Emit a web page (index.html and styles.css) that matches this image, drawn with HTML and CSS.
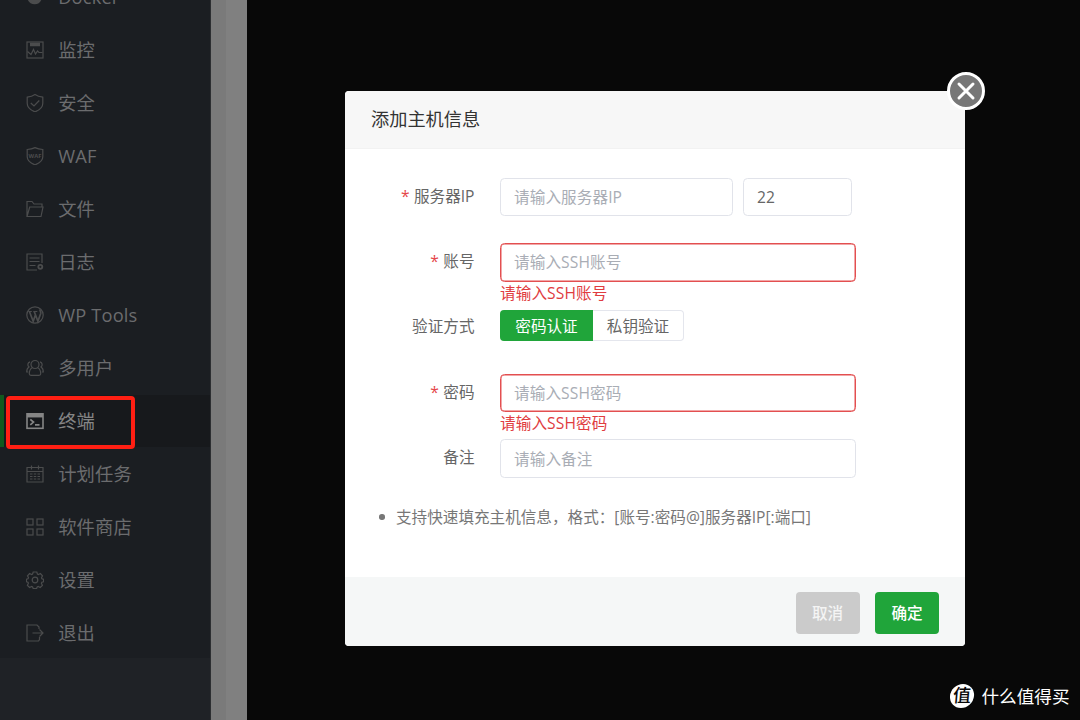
FILE: index.html
```html
<!DOCTYPE html>
<html lang="zh-CN">
<head>
    <meta charset="UTF-8">
    <meta name="viewport" content="width=device-width, initial-scale=1.0">
    <title>终端</title>
    <link rel="stylesheet" href="styles.css">
</head>
<body>
    <div class="layout">
        <div class="sidebar">
            <ul class="menu">
                <li>
                    <svg class="icon" viewBox="0 0 18 18"><path d="M1 8h15c0 4.800-2.800 8.300-7.300 8.300S1 12.800 1 8z" fill="currentColor" stroke="none"/></svg>
                    <span>Docker</span>
                </li>
                <li>
                    <svg class="icon" viewBox="0 0 18 18"><rect x="1" y="1" width="16" height="16"/><path d="M4 3.500h10" stroke-width="3.500"/><path d="M1.500 10.500l3.500 3 2.500-5 2 4.500 2-3 1.500 1.500h3.500"/></svg>
                    <span>监控</span>
                </li>
                <li>
                    <svg class="icon" viewBox="0 0 18 18"><path d="M9 .6c2.500 1.700 5 2.300 7.800 2.600v6c0 4-3.300 6.800-7.800 8.700-4.500-1.900-7.800-4.700-7.800-8.700v-6C4 2.900 6.500 2.300 9 .6z"/><path d="M4.800 9l3.200 3 5.300-5.500"/></svg>
                    <span>安全</span>
                </li>
                <li>
                    <svg class="icon" viewBox="0 0 18 18"><path d="M9 .6c2.500 1.200 5 1.700 7.800 1.900v7.200c0 3.800-3.300 6.400-7.800 8.200-4.500-1.800-7.800-4.400-7.800-8.200V2.500C4 2.300 6.500 1.800 9 .6z"/><text class="waf" x="9" y="10.800" text-anchor="middle">WAF</text></svg>
                    <span>WAF</span>
                </li>
                <li>
                    <svg class="icon" viewBox="0 0 18 18"><path d="M1 16.500V1.500h5l2 2.500h8v3M1 16.500L3.700 7H17l-2 9.500z"/></svg>
                    <span>文件</span>
                </li>
                <li>
                    <svg class="icon" viewBox="0 0 18 18"><path d="M16 10V1H1v16h10M3.500 5h10M3.500 8.500h10M3.500 12.500h6"/><circle cx="14.300" cy="13.800" r="2" stroke-width="1.800"/></svg>
                    <span>日志</span>
                </li>
                <li>
                    <svg class="icon" viewBox="0 0 18 18"><circle cx="9" cy="9" r="8.200"/><path d="M2.300 5.500h3.500M7.300 5.500h4" /><path d="M3.500 5.800l3.700 9.500L9.400 9M8.300 5.800l3.600 9.500 2.800-7.800c.5-1.700-1-2.500-.7-4" stroke-width="1.700"/></svg>
                    <span>WP Tools</span>
                </li>
                <li>
                    <svg class="icon" viewBox="0 0 18 18"><circle cx="9" cy="5.500" r="4"/><path d="M6.300 8.800c-2 1-3 3-3 6 0 1 .7 1.500 1.700 1.500h8c1 0 1.700-.5 1.700-1.500 0-3-1-5-3-6M4 2.800C1.500 3.500 1.200 6.500 3 8c-1.600.9-2.300 2.500-2.300 5h1.500M14 2.800c2.500.7 2.800 3.700 1 5.200 1.600.9 2.300 2.500 2.300 5h-1.500"/></svg>
                    <span>多用户</span>
                </li>
                <li class="active">
                    <svg class="icon" viewBox="0 0 18 18"><rect x="1" y="1.800" width="16" height="14.500" stroke-width="1.600"/><path d="M1 3.700h16" stroke-width="3.500"/><path d="M4.300 7.300l3.200 2.800-3.200 2.800M9 12.800h4.500" stroke-width="1.700"/></svg>
                    <span>终端</span>
                </li>
                <li>
                    <svg class="icon" viewBox="0 0 18 18"><path d="M1 2.500h16V17H1zM1 6.500h16M5.500.5v4M12.500.5v4"/><path d="M4 9h10M4 11.500h10M4 14h10" stroke-dasharray="2.500 1.250"/></svg>
                    <span>计划任务</span>
                </li>
                <li>
                    <svg class="icon" viewBox="0 0 18 18"><rect x="1" y="1" width="6" height="6"/><rect x="11" y="1" width="6" height="6"/><rect x="1" y="11" width="6" height="6"/><rect x="11" y="11" width="6" height="6"/></svg>
                    <span>软件商店</span>
                </li>
                <li>
                    <svg class="icon" viewBox="0 0 18 18"><circle cx="9" cy="9" r="2.800"/><path d="M7.200 1h3.600l.6 2 1 .5 2-1 2.100 2.300-1 2 .4 1 1.700.5v2.400l-1.700.6-.5 1 1 2-2.200 2.200-2-1-1 .5-.6 1.500H7.200l-.6-1.500-1-.5-2 1-2.200-2.200 1-2-.4-1-1.600-.6V8.300L2 7.800l.5-1-1-2 2.100-2.300 2 1 1-.5z"/></svg>
                    <span>设置</span>
                </li>
                <li>
                    <svg class="icon" viewBox="0 0 18 18"><path d="M13 5V3l-2-2H1v16h11.500l1-1.500V13M6.500 9h10M13.500 5.500L17 9l-3.500 3.500"/></svg>
                    <span>退出</span>
                </li>
            </ul>
        </div>
        <div class="gutter"></div>
        <div class="terminal"></div>
    </div>

    <div class="mark-box"></div>

    <div class="dialog">
        <div class="dialog-header">添加主机信息</div>
        <div class="close-btn">
            <svg viewBox="0 0 20 20"><path d="M3 3l14 14M17 3L3 17"/></svg>
        </div>
        <div class="dialog-body">
            <div class="form-row">
                <label class="required">服务器IP</label>
                <div class="field hosts">
                    <input class="input host" type="text" placeholder="请输入服务器IP">
                    <input class="input port" type="text" value="22">
                </div>
            </div>
            <div class="form-row">
                <label class="required">账号</label>
                <div class="field">
                    <input class="input error" type="text" placeholder="请输入SSH账号">
                    <div class="error-text">请输入SSH账号</div>
                </div>
            </div>
            <div class="form-row">
                <label>验证方式</label>
                <div class="field auth-type">
                    <button class="on">密码认证</button>
                    <button>私钥验证</button>
                </div>
            </div>
            <div class="form-row">
                <label class="required">密码</label>
                <div class="field">
                    <input class="input error" type="text" placeholder="请输入SSH密码">
                    <div class="error-text">请输入SSH密码</div>
                </div>
            </div>
            <div class="form-row">
                <label>备注</label>
                <div class="field">
                    <input class="input" type="text" placeholder="请输入备注">
                </div>
            </div>
            <ul class="tips">
                <li>支持快速填充主机信息，格式：[账号:密码@]服务器IP[:端口]</li>
            </ul>
        </div>
        <div class="dialog-footer">
            <button class="btn cancel">取消</button>
            <button class="btn confirm">确定</button>
        </div>
    </div>

    <div class="watermark">
        <span class="badge">值</span>
        <span>什么值得买</span>
    </div>
</body>
</html>
```

FILE: styles.css
```css
* {
    box-sizing: border-box;
}

body {
    margin: 0;
    width: 1080px;
    height: 720px;
    overflow: hidden;
    position: relative;
    background-color: #080808;
    font-family: "Open Sans", "Noto Sans CJK SC", sans-serif;
    font-size: 15.6px;
    color: #666;
}

ul {
    list-style: none;
    margin: 0;
    padding: 0;
}

input, button {
    font-family: inherit;
    font-size: inherit;
    outline: none;
}

.layout {
    display: flex;
    height: 720px;
}

/* sidebar */
.sidebar {
    width: 211px;
    overflow: hidden;
    background-color: #1f2226;
    border-right: 1px solid #2c2e31;
}

.menu {
    margin-top: -28.8px;
    background-color: #1b1e22;
}

.menu li {
    display: flex;
    align-items: center;
    height: 51.95px;
    margin-bottom: 1px;
    padding-top: 0.6px;
    padding-left: 26px;
    font-size: 18.3px;
    line-height: 26px;
    color: #6b6c6e;
    white-space: nowrap;
}

.menu li:last-child {
    margin-bottom: 0;
}

.menu .active {
    padding-left: 22px;
    border-left: 4px solid #10591e;
    background-color: #17191c;
    color: #858585;
}

.menu span {
    letter-spacing: 0.15px;
}

.icon {
    width: 18px;
    height: 18px;
    margin-right: 14.2px;
    fill: none;
    stroke: currentColor;
    stroke-width: 1.2;
    color: #4b4c4d;
    flex-shrink: 0;
}

.active .icon {
    color: #858585;
}

.waf {
    font-size: 5.8px;
    font-weight: bold;
    fill: currentColor;
    stroke: none;
}

.gutter {
    width: 36px;
    background-color: #808080;
    border-left: 15px solid #7a7a7a;
}

.terminal {
    flex: 1;
    background-color: #080808;
}

/* red frame over the current menu item */
.mark-box {
    position: absolute;
    left: 6px;
    top: 396px;
    width: 129px;
    height: 53px;
    border: 4px solid #ff1f13;
    border-radius: 4px;
}

/* dialog */
.dialog {
    position: absolute;
    left: 345px;
    top: 91px;
    width: 620px;
    height: 555px;
    display: flex;
    flex-direction: column;
    background-color: #fff;
    border-radius: 4px;
}

.dialog-header {
    height: 57.5px;
    padding-left: 26px;
    border-bottom: 1px solid #f2f2f2;
    border-radius: 4px 4px 0 0;
    background-color: #f7f7f7;
    font-size: 18.2px;
    line-height: 56px;
    color: #333;
}

.close-btn {
    position: absolute;
    right: -20px;
    top: -19.5px;
    width: 38.5px;
    height: 38.5px;
    display: flex;
    align-items: center;
    justify-content: center;
    border: 3.5px solid #fff;
    border-radius: 50%;
    background-color: #777;
}

.close-btn svg {
    width: 20px;
    height: 20px;
    fill: none;
    stroke: #fff;
    stroke-width: 3;
    stroke-linecap: round;
}

.dialog-body {
    flex: 1;
    padding-top: 29.2px;
}

.form-row {
    display: flex;
    height: 65.4px;
}

.form-row label {
    width: 129.5px;
    margin-right: 25.5px;
    text-align: right;
    line-height: 37px;
}

.required::before {
    content: "*";
    margin-right: 4.5px;
    color: #e5474a;
}

.field {
    width: 355.5px;
}

.hosts {
    display: flex;
    gap: 10px;
}

.input {
    display: block;
    width: 100%;
    height: 38.5px;
    padding: 0 13px;
    border: 1px solid #e1e3ea;
    border-radius: 4.5px;
    background-color: #fff;
    color: #666;
}

.input::placeholder {
    color: #a9adb5;
    letter-spacing: 0.1px;
}

.host {
    width: 233px;
}

.port {
    width: 109px;
}

.input.error {
    border-color: #e34f50;
    box-shadow: inset 0 0 0 0.5px #e34f50;
}

.error-text {
    line-height: 22px;
    letter-spacing: 0.1px;
    color: #e03c3f;
}

.auth-type {
    display: flex;
    padding-top: 1.6px;
}

.auth-type button {
    width: 91px;
    height: 31px;
    padding: 0;
    border: 1px solid #e4e6ed;
    border-left: none;
    border-radius: 0 4px 4px 0;
    background-color: #fff;
    color: #666;
}

.auth-type .on {
    width: 93px;
    border: none;
    border-radius: 4px 0 0 4px;
    background-color: #20a53a;
    color: #fff;
}

.tips {
    padding-top: 0.4px;
    padding-left: 34px;
}

.tips li {
    display: flex;
    align-items: center;
    line-height: 24px;
    color: #777;
}

.tips li::before {
    content: "";
    width: 5.5px;
    height: 5.5px;
    margin-right: 11.5px;
    border-radius: 50%;
    background-color: #777;
}

.dialog-footer {
    display: flex;
    justify-content: flex-end;
    gap: 15.5px;
    height: 69px;
    padding: 15px 26px 0 0;
    border-radius: 0 0 4px 4px;
    background-color: #f5f7f7;
}

.btn {
    width: 64px;
    height: 41.5px;
    padding: 0 0 1px;
    border: none;
    border-radius: 4px;
    color: #fff;
    font-weight: 500;
}

.cancel {
    background-color: #cbcbcb;
    color: #f4f4f4;
}

.confirm {
    background-color: #20a53a;
}

/* site mark */
.watermark {
    position: absolute;
    right: 10.5px;
    bottom: 11px;
    display: flex;
    align-items: center;
    gap: 7.5px;
    font-size: 17.6px;
    line-height: 26px;
    color: #fff;
}

.badge {
    width: 24px;
    height: 24px;
    border-radius: 50%;
    background-color: #fff;
    color: #080808;
    font-size: 18px;
    line-height: 23px;
    font-weight: 500;
    text-align: center;
    transform: skewX(-5deg);
}
```
